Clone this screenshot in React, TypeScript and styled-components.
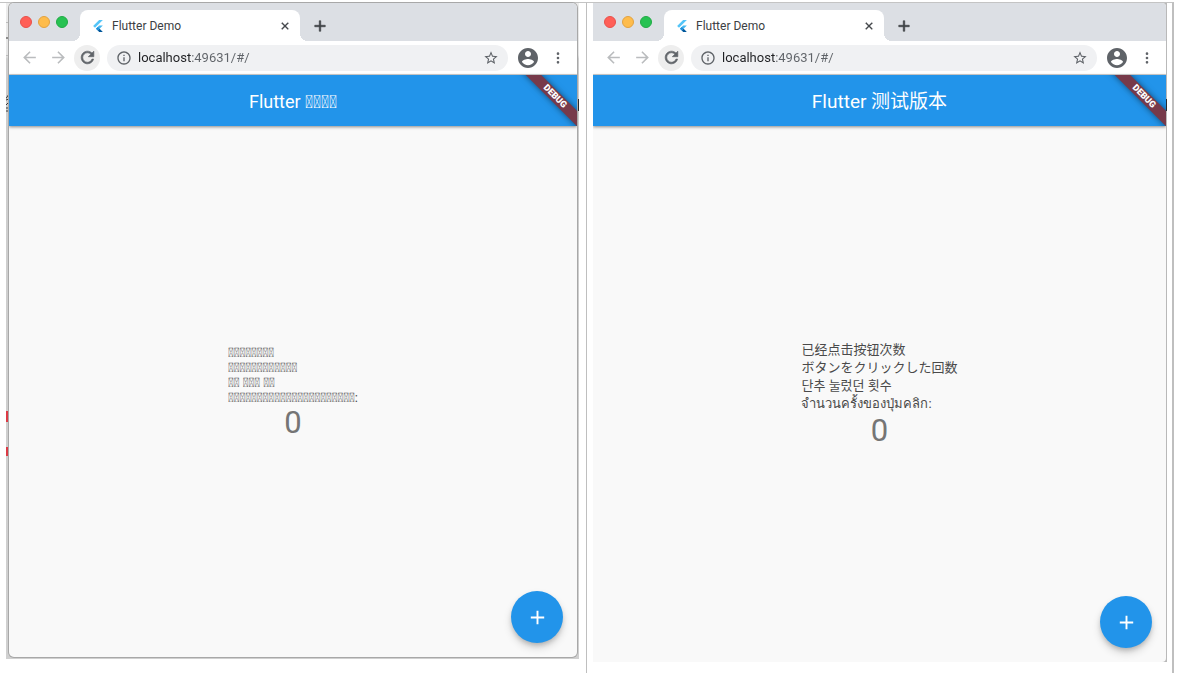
import React from "react";
import styled, { createGlobalStyle, css } from "styled-components";

const GlobalStyle = createGlobalStyle`
  *, *::before, *::after { box-sizing: border-box; }
  body { margin: 0; background: #fff; }
  button, input { font: inherit; color: inherit; border: 0; padding: 0; margin: 0; background: none; }
`;

const UI_FONT = `Roboto, "Noto Sans CJK SC", "Noto Sans", sans-serif`;

const Page = styled.main`
  display: grid;
  grid-template-columns: 1fr 1fr;
  min-height: 100vh;
  padding: 2px 3px 0 0;
  font-family: ${UI_FONT};
`;

const Cell = styled.section<{ $last?: boolean }>`
  display: flex;
  min-width: 0;
  border-top: 1px solid #c4c4c4;
  border-right: ${(p) => (p.$last ? 2 : 1)}px solid #bfbfbf;
  padding: ${(p) => (p.$last ? "0 5px 11px 6px" : "0 7px 14px 6px")};
`;

const Backdrop = styled.div<{ $framed?: boolean }>`
  position: relative;
  display: flex;
  flex: 1;
  min-width: 0;
  ${(p) =>
    p.$framed
      ? css`
          padding: 0 2px 2px 3px;
          background: linear-gradient(180deg, #ededed 0, #e4e4e4 52px, #cdcdcd 56px, #d0d0d0 100%);
        `
      : css`
          padding: 0 1px 0 0;
          background: #b9b9b9;
        `}
`;

const Mark = styled.span<{ $side: "left" | "right"; $top: number; $height: number; $color: string }>`
  position: absolute;
  ${(p) => p.$side}: 0;
  top: ${(p) => p.$top}px;
  width: ${(p) => (p.$side === "left" ? 3 : 1)}px;
  height: ${(p) => p.$height}px;
  background: ${(p) => p.$color};
`;

const EdgeStrokes = styled.svg`
  position: absolute;
  left: 0;
  top: 90px;
`;

const Window = styled.article<{ $framed?: boolean }>`
  position: relative;
  display: flex;
  flex-direction: column;
  flex: 1;
  min-width: 0;
  overflow: hidden;
  background: #f9f9f9;
  border-radius: ${(p) => (p.$framed ? "5px" : "0 4px 4px 0")};
  box-shadow: ${(p) => (p.$framed ? "0 0 0 1px #a8a8a8" : "none")};
`;

const TabStrip = styled.header`
  display: flex;
  align-items: flex-end;
  height: 38px;
  padding-left: 11px;
  background: #dcdfe4;
`;

const Lights = styled.div`
  display: flex;
  gap: 6px;
  height: 38px;
  align-items: center;
  margin-right: 12px;
`;

const Light = styled.button<{ $color: string; $edge: string }>`
  width: 12px;
  height: 12px;
  border-radius: 50%;
  background: ${(p) => p.$color};
  border: 1px solid ${(p) => p.$edge};
`;

const Tab = styled.div`
  position: relative;
  display: flex;
  align-items: center;
  flex: 0 1 220px;
  height: 31px;
  padding: 0 9px 0 12px;
  border-radius: 8px 8px 0 0;
  background: #fff;
  color: #3c4043;
  font-size: 12px;
  line-height: 16px;

  &::before,
  &::after {
    content: "";
    position: absolute;
    bottom: 0;
    width: 8px;
    height: 8px;
  }
  &::before {
    left: -8px;
    background: radial-gradient(circle at 0 0, transparent 8px, #fff 8px);
  }
  &::after {
    right: -8px;
    background: radial-gradient(circle at 100% 0, transparent 8px, #fff 8px);
  }
`;

const TabTitle = styled.span`
  flex: 1;
  margin-left: 8px;
`;

const IconButton = styled.button<{ $size?: number; $tone?: string; $fill?: string }>`
  display: grid;
  place-items: center;
  flex: none;
  width: ${(p) => p.$size ?? 26}px;
  height: ${(p) => p.$size ?? 26}px;
  border-radius: 50%;
  color: ${(p) => p.$tone ?? "#5f6368"};
  background: ${(p) => p.$fill ?? "transparent"};
`;

const NewTab = styled(IconButton)`
  margin: 0 0 2px 7px;
`;

const Toolbar = styled.div`
  display: flex;
  align-items: center;
  height: 34px;
  padding: 0 8px 0 7px;
  background: #fff;
  border-bottom: 1px solid #d2d2d2;
`;

const NavButtons = styled.div`
  display: flex;
  gap: 3px;
`;

const Omnibox = styled.label`
  display: flex;
  align-items: center;
  flex: 1;
  min-width: 0;
  height: 26px;
  margin: 0 7px;
  padding: 0 4px 0 9px;
  border-radius: 13px;
  background: #f0f1f3;
  color: #5f6368;
`;

const Address = styled.input`
  flex: 1;
  min-width: 0;
  height: 20px;
  margin-left: 6px;
  font-size: 13px;
  line-height: 20px;
  color: #202124;
  background: linear-gradient(90deg, #202124 54px, #5f6368 54px);
  background-clip: text;
  -webkit-text-fill-color: transparent;
  outline: none;
`;

const Actions = styled.div`
  display: flex;
  align-items: center;
  gap: 6px;
`;

const AppBarWrap = styled.div`
  box-shadow: 0 1px 3px rgba(0, 0, 0, 0.45);
`;

const AppBar = styled.div`
  position: relative;
  display: grid;
  place-items: center;
  height: 51px;
  padding-top: 3px;
  overflow: hidden;
  background: #2294ea;
  color: #fff;
`;

const AppTitle = styled.h1<{ $size: number }>`
  margin: 0;
  font-size: ${(p) => p.$size}px;
  line-height: 24px;
  font-weight: 400;
`;

const Ribbon = styled.span`
  position: absolute;
  top: 16px;
  right: -24px;
  width: 92px;
  height: 11px;
  transform: rotate(45deg);
  background: #773a4a;
  box-shadow: 0 0 6px rgba(0, 0, 0, 0.5);
  font-size: 9px;
  line-height: 11px;
  font-weight: 900;
  text-align: center;
`;

const Content = styled.div`
  display: flex;
  flex-direction: column;
  align-items: center;
  justify-content: center;
  flex: 1;
  padding-top: 2px;
`;

const Lines = styled.p<{ $leading: number }>`
  margin: 0;
  font-size: 13px;
  line-height: ${(p) => p.$leading}px;
  color: #4a4a4a;
`;

const Line = styled.span`
  display: block;
`;

const Counter = styled.output`
  font-size: 31px;
  line-height: 36px;
  color: #757575;
`;

const AddButton = styled.button`
  position: absolute;
  right: 14px;
  bottom: 14px;
  display: grid;
  place-items: center;
  width: 52px;
  height: 52px;
  border-radius: 50%;
  background: #2294ea;
  color: #fff;
  box-shadow: 0 3px 5px -1px rgba(0, 0, 0, 0.2), 0 5px 9px rgba(0, 0, 0, 0.14);
`;

const PATHS = {
  back: "M20 11H7.83l5.59-5.59L12 4l-8 8 8 8 1.41-1.41L7.83 13H20v-2z",
  forward: "M12 4l-1.41 1.41L16.17 11H4v2h12.17l-5.58 5.59L12 20l8-8z",
  reload:
    "M17.65 6.35C16.2 4.9 14.21 4 12 4c-4.42 0-7.99 3.58-7.99 8s3.57 8 7.99 8c3.73 0 6.84-2.55 7.73-6h-2.08c-.82 2.33-3.04 4-5.65 4-3.31 0-6-2.69-6-6s2.69-6 6-6c1.66 0 3.14.69 4.22 1.78L13 11h7V4l-2.35 2.35z",
  info: "M11 7h2v2h-2zm0 4h2v6h-2zm1-9C6.48 2 2 6.48 2 12s4.48 10 10 10 10-4.48 10-10S17.52 2 12 2zm0 18c-4.41 0-8-3.59-8-8s3.59-8 8-8 8 3.59 8 8-3.59 8-8 8z",
  star: "M22 9.24l-7.19-.62L12 2 9.19 8.63 2 9.24l5.46 4.73L5.82 21 12 17.27 18.18 21l-1.63-7.03L22 9.24zM12 15.4l-3.76 2.27 1-4.28-3.32-2.88 4.38-.38L12 6.1l1.71 4.04 4.38.38-3.32 2.88 1 4.28L12 15.4z",
  account:
    "M12 2C6.48 2 2 6.48 2 12s4.48 10 10 10 10-4.48 10-10S17.52 2 12 2zm0 3c1.66 0 3 1.34 3 3s-1.34 3-3 3-3-1.34-3-3 1.34-3 3-3zm0 14.2c-2.5 0-4.71-1.28-6-3.22.03-1.99 4-3.08 6-3.08 1.99 0 5.97 1.09 6 3.08-1.29 1.94-3.5 3.22-6 3.22z",
  more: "M12 7.5a2 2 0 100-4 2 2 0 000 4zm0 6.5a2 2 0 100-4 2 2 0 000 4zm0 6.5a2 2 0 100-4 2 2 0 000 4z",
  close: "M19 6.41L17.59 5 12 10.59 6.41 5 5 6.41 10.59 12 5 17.59 6.41 19 12 13.41 17.59 19 19 17.59 13.41 12z",
  add: "M19 13h-6v6h-2v-6H5v-2h6V5h2v6h6v2z",
};

function Icon({ name, size, bold }: { name: keyof typeof PATHS; size: number; bold?: boolean }) {
  return (
    <svg width={size} height={size} viewBox="0 0 24 24" fill="currentColor" stroke={bold ? "currentColor" : "none"} strokeWidth={0.8} aria-hidden="true">
      <path d={PATHS[name]} />
    </svg>
  );
}

function FlutterMark() {
  return (
    <svg width="12" height="12" viewBox="0 0 24 24" aria-hidden="true">
      <path d="M14.3 0L2.3 12 6 15.7 21.7 0z" fill="#54c5f8" />
      <path d="M14.3 11.07L7.86 17.53l3.7 3.7L21.7 11.07z" fill="#45b8f0" />
      <path d="M11.56 21.23L14.33 24h7.37l-6.46-6.47z" fill="#01579b" />
      <path d="M7.86 17.53l3.69-3.69 3.69 3.69-3.69 3.7z" fill="#1f8fdb" />
    </svg>
  );
}

type BrowserProps = {
  framed?: boolean;
  title: string;
  titleSize: number;
  lines: { text: string; lang?: string }[];
  leading: number;
};

function BrowserWindow({ framed, title, titleSize, lines, leading }: BrowserProps) {
  return (
    <Window $framed={framed}>
      <TabStrip>
        <Lights>
          <Light $color="#ff5f57" $edge="#e9504a" aria-label="Close window" />
          <Light $color="#febc4b" $edge="#e2a240" aria-label="Minimize window" />
          <Light $color="#27c252" $edge="#20ab45" aria-label="Zoom window" />
        </Lights>
        <Tab>
          <FlutterMark />
          <TabTitle>Flutter Demo</TabTitle>
          <IconButton $size={12} $tone="#3c4043" aria-label="Close tab">
            <Icon name="close" size={12} bold />
          </IconButton>
        </Tab>
        <NewTab $tone="#3c4043" aria-label="New tab">
          <Icon name="add" size={18} bold />
        </NewTab>
      </TabStrip>
      <Toolbar>
        <NavButtons>
          <IconButton $tone="#babcbe" aria-label="Back">
            <Icon name="back" size={19} />
          </IconButton>
          <IconButton $tone="#babcbe" aria-label="Forward">
            <Icon name="forward" size={19} />
          </IconButton>
          <IconButton $fill="#eeeeee" aria-label="Reload">
            <Icon name="reload" size={19} bold />
          </IconButton>
        </NavButtons>
        <Omnibox>
          <Icon name="info" size={16} />
          <Address aria-label="Address" defaultValue="localhost:49631/#/" />
          <IconButton aria-label="Bookmark this tab">
            <Icon name="star" size={16} />
          </IconButton>
        </Omnibox>
        <Actions>
          <IconButton aria-label="Profile">
            <Icon name="account" size={24} />
          </IconButton>
          <IconButton $size={22} aria-label="Menu">
            <Icon name="more" size={16} />
          </IconButton>
        </Actions>
      </Toolbar>
      <AppBarWrap>
        <AppBar>
          <AppTitle $size={titleSize}>{title}</AppTitle>
          <Ribbon>DEBUG</Ribbon>
        </AppBar>
      </AppBarWrap>
      <Content>
        <Lines $leading={leading}>
          {lines.map((line, i) => (
            <Line key={i} lang={line.lang}>
              {line.text}
            </Line>
          ))}
        </Lines>
        <Counter>0</Counter>
      </Content>
      <AddButton aria-label="Increment">
        <Icon name="add" size={23} />
      </AddButton>
    </Window>
  );
}

// A private-use code point no font covers, so it shows as the missing-glyph box.
const missing = (count: number) => "\u{F0000}".repeat(count);

export default function App() {
  return (
    <>
      <GlobalStyle />
      <Page>
        <Cell>
          <Backdrop $framed>
            <Mark $side="left" $top={19} $height={1} $color="#bcbcbc" />
            <Mark $side="left" $top={34} $height={2} $color="#8c8c8c" />
            <Mark $side="left" $top={52} $height={1} $color="#bcbcbc" />
            <EdgeStrokes width="3" height="20" viewBox="0 0 3 20" fill="none" stroke="#3a3a3a" aria-hidden="true">
              <path d="M3 1L0 5.500M0 7l3-1M3 9L0 12M0 15h3M0 18h3" />
            </EdgeStrokes>
            <Mark $side="left" $top={408} $height={11} $color="#dc3a45" />
            <Mark $side="left" $top={444} $height={9} $color="#dc3a45" />
            <Mark $side="right" $top={96} $height={12} $color="#2a2a2a" />
            <BrowserWindow
              framed
              title={`Flutter ${missing(4)}`}
              titleSize={18}
              leading={15}
              lines={[
                { text: missing(8) },
                { text: missing(12) },
                { text: `${missing(2)} ${missing(3)} ${missing(2)}` },
                { text: `${missing(22)}:` },
              ]}
            />
          </Backdrop>
        </Cell>
        <Cell $last>
          <Backdrop>
            <Mark $side="right" $top={96} $height={12} $color="#2a2a2a" />
            <BrowserWindow
              title="Flutter 测试版本"
              titleSize={19}
              leading={18}
              lines={[
                { text: "已经点击按钮次数", lang: "zh-CN" },
                { text: "ボタンをクリックした回数", lang: "ja" },
                { text: "단추 눌렀던 횟수", lang: "ko" },
                { text: "จำนวนครั้งของปุ่มคลิก:", lang: "th" },
              ]}
            />
          </Backdrop>
        </Cell>
      </Page>
    </>
  );
}
